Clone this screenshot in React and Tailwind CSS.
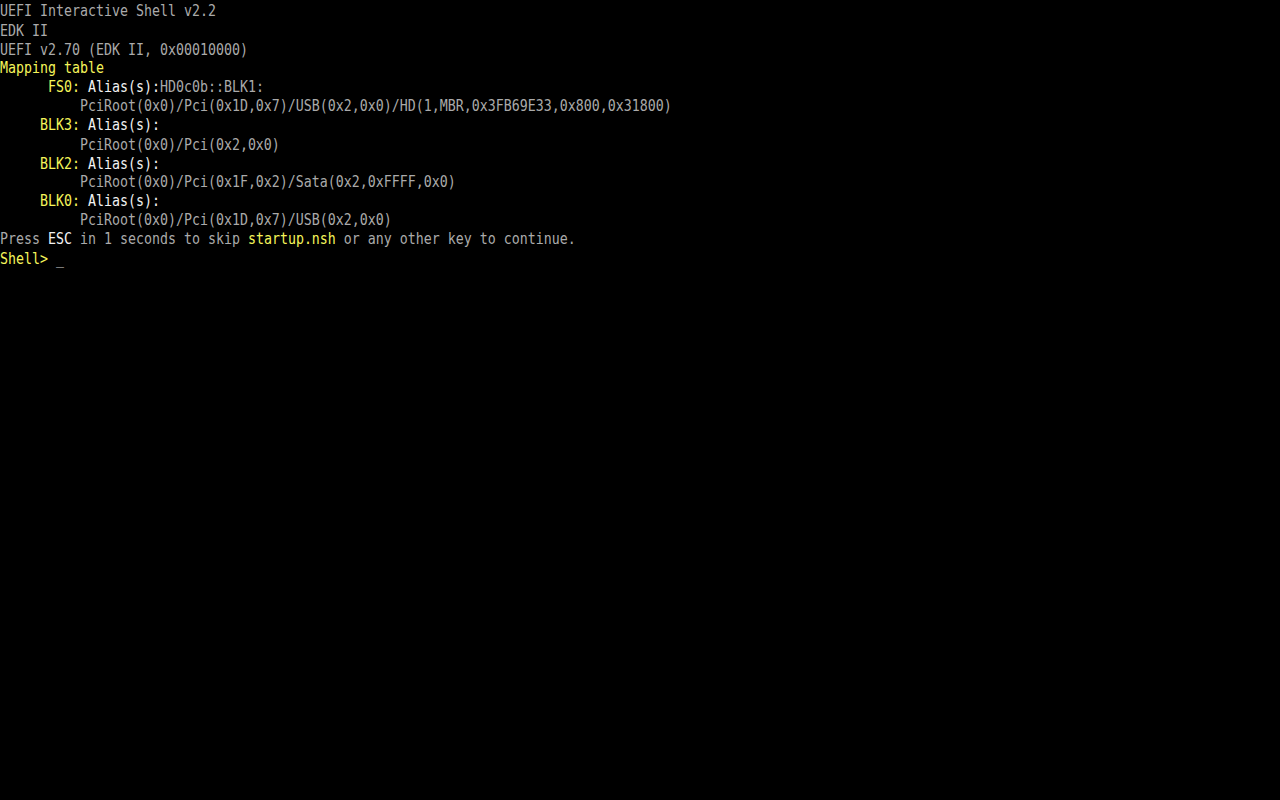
const lines = [
  [['gray', 'UEFI Interactive Shell v2.2']],
  [['gray', 'EDK II']],
  [['gray', 'UEFI v2.70 (EDK II, 0x00010000)']],
  [['yellow', 'Mapping table']],
  [['gray', '      '], ['yellow', 'FS0:'], ['white', ' Alias(s):'], ['gray', 'HD0c0b::BLK1:']],
  [['gray', '          PciRoot(0x0)/Pci(0x1D,0x7)/USB(0x2,0x0)/HD(1,MBR,0x3FB69E33,0x800,0x31800)']],
  [['gray', '     '], ['yellow', 'BLK3:'], ['white', ' Alias(s):']],
  [['gray', '          PciRoot(0x0)/Pci(0x2,0x0)']],
  [['gray', '     '], ['yellow', 'BLK2:'], ['white', ' Alias(s):']],
  [['gray', '          PciRoot(0x0)/Pci(0x1F,0x2)/Sata(0x2,0xFFFF,0x0)']],
  [['gray', '     '], ['yellow', 'BLK0:'], ['white', ' Alias(s):']],
  [['gray', '          PciRoot(0x0)/Pci(0x1D,0x7)/USB(0x2,0x0)']],
  [
    ['gray', 'Press '],
    ['white', 'ESC'],
    ['gray', ' in 1 seconds to skip '],
    ['yellow', 'startup.nsh'],
    ['gray', ' or any other key to continue.'],
  ],
  [['yellow', 'Shell> '], ['gray', '_']],
]

const colors = {
  gray: 'text-[#aaaaaa]',
  white: 'text-[#f2f2f2]',
  yellow: 'text-[#f5f55a]',
}

export default function App() {
  return (
    <div className="w-[1280px] h-[800px] bg-black overflow-hidden pt-[2px]">
      {/* 8x19 cells: mono glyphs at 8px advance, stretched vertically */}
      <div
        className="origin-top-left scale-y-[1.2] text-[13.29px] leading-[15.833px] whitespace-pre"
        style={{ fontFamily: '"DejaVu Sans Mono", "Liberation Mono", monospace' }}
      >
        {lines.map((segs, i) => (
          <div key={i} className="h-[15.833px]">
            {segs.map(([c, t], j) => (
              <span key={j} className={colors[c]}>{t}</span>
            ))}
          </div>
        ))}
      </div>
    </div>
  )
}
